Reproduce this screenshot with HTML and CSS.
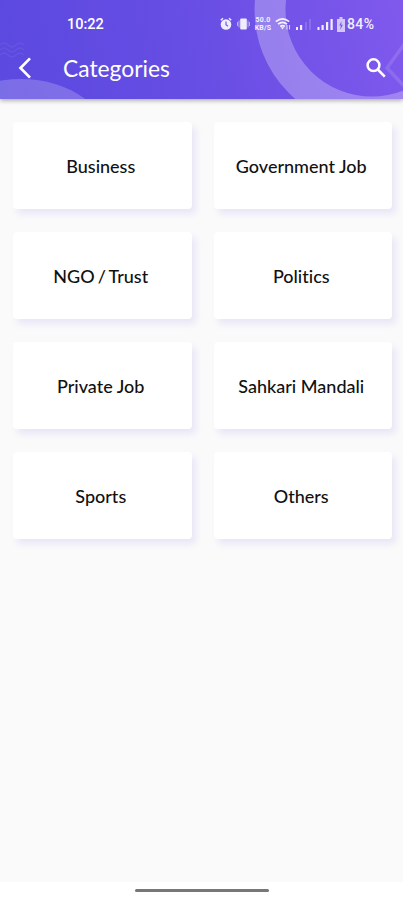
FILE: index.html
```
<!DOCTYPE html>
<html lang="en">
<head>
<meta charset="utf-8">
<meta name="viewport" content="width=device-width, initial-scale=1">
<title>Categories</title>
<link rel="stylesheet" href="styles.css">
</head>
<body>
<header class="header">
  <svg class="pattern" viewBox="0 0 403 99" aria-hidden="true">
    <circle cx="372" cy="10" r="102" fill="none" stroke="#fff" stroke-opacity=".27" stroke-width="31"/>
    <ellipse cx="21" cy="147" rx="91" ry="68" fill="#fff" fill-opacity=".2"/>
    <path d="M405 43L387 68l18 19" fill="none" stroke="#fff" stroke-opacity=".12" stroke-width="3.500"/>
    <path d="M0 45q4-4 8 0t8 0 8 0M0 50q4-4 8 0t8 0 8 0M0 55q4-4 8 0t8 0 8 0" fill="none" stroke="#fff" stroke-opacity=".06" stroke-width="1.5"/>
  </svg>
  <div class="status">
    <span class="time">10:22</span>
    <div class="indicators">
      <svg class="alarm" width="12" height="14" viewBox="0 0 12 14"><path d="M.8 3.2L3 1.2M11.200 3.200L9 1.200" stroke="#fff" stroke-width="1.5"/><circle cx="6" cy="7.500" r="5.300" fill="#fff"/><path d="M6 4.500v3.300l2 1.400" fill="none" stroke="#7359e8" stroke-width="1.200"/></svg>
      <svg class="vibrate" width="13" height="14" viewBox="0 0 13 14"><rect x="3.200" y="1.500" width="6.600" height="11" rx="1" fill="#fff"/><path d="M2 3.500v7M11 3.500v7M.5 5v4M12.500 5v4" stroke="#fff" stroke-opacity=".6"/></svg>
      <span class="speed"><b>50.0</b><b>KB/S</b></span>
      <svg class="wifi" width="17" height="14" viewBox="0 0 17 14"><g fill="none" stroke="#fff" stroke-width="1.700"><path d="M.8 4.700q6.700-5.500 13.400 0M3 7.200q4.500-3.600 9 0M5.200 9.500q2.300-1.800 4.600 0"/></g><path d="M5.800 10.300h3.400L7.500 12.500z" fill="#fff"/><path d="M12 8v4.500M14.500 8v4.500" stroke="#fff" stroke-opacity=".75" stroke-width="1.200"/></svg>
      <svg class="signal-one" width="17" height="14" viewBox="0 0 17 14" fill="#fff"><path d="M1 10h2v3H1zM5 8h2.200v5H5z"/><path d="M10 5h2v8h-2zM14 2h2v11h-2z" opacity=".18"/></svg>
      <svg class="signal-two" width="17" height="14" viewBox="0 0 17 14" fill="#fff"><path d="M.5 10h2v3h-2zM4.500 8h2.200v5H4.500zM9 5h2.200v8H9zM13.500 2h2.200v11h-2.200z"/></svg>
      <svg class="battery" width="8" height="15" viewBox="0 0 8 15"><path d="M2.500 0h3v2H8v13H0V2h2.500z" fill="#fff" fill-opacity=".75"/><path d="M4.600 4L2.300 8.500h1.500L3.300 13l2.500-5.200H4.200z" fill="#7658e6"/></svg>
      <span class="percent">84%</span>
    </div>
  </div>
  <div class="toolbar">
    <svg class="back" width="16" height="24" viewBox="0 0 16 24"><path d="M13 2.400L3.500 12l9.500 9.600" fill="none" stroke="#fff" stroke-width="2.700"/></svg>
    <h1 class="title">Categories</h1>
    <svg class="search" width="22" height="22" viewBox="0 0 22 22" fill="none" stroke="#fff" stroke-width="2.500"><circle cx="8.500" cy="8.200" r="5.900"/><path d="M12.800 12.500L19.800 19.600"/></svg>
  </div>
</header>
<main class="grid">
  <div class="card">Business</div>
  <div class="card">Government Job</div>
  <div class="card tight">NGO / Trust</div>
  <div class="card">Politics</div>
  <div class="card">Private Job</div>
  <div class="card">Sahkari Mandali</div>
  <div class="card">Sports</div>
  <div class="card">Others</div>
</main>
<footer class="navbar"><div class="handle"></div></footer>
</body>
</html>
```
FILE: styles.css
```
* { box-sizing: border-box; }
body {
  margin: 0;
  height: 900px;
  display: flex;
  flex-direction: column;
  overflow: hidden;
  background: #fafafa;
  font-family: Lato, sans-serif;
}
.header {
  position: relative;
  height: 99px;
  flex: none;
  color: #fff;
  background: linear-gradient(78deg, #5b49e0 0%, #664de3 45%, #8059ed 100%);
  box-shadow: 0 1px 5px rgba(0, 0, 0, .4);
}
.pattern {
  position: absolute;
  inset: 0;
  width: 403px;
  height: 99px;
}
.status {
  position: relative;
  height: 42px;
  padding: 6px 28px 0 67px;
  display: flex;
  align-items: center;
  justify-content: space-between;
  font-family: Roboto, sans-serif;
}
.time { font-size: 14.500px; font-weight: 500; }
.indicators { display: flex; align-items: center; opacity: .9; }
.indicators svg { flex: none; }
.vibrate { margin-left: 5px; }
.speed {
  width: 18px;
  margin-left: 4px;
  display: flex;
  flex-direction: column;
  align-items: center;
  font-size: 7px;
  line-height: 8px;
  letter-spacing: .2px;
}
.wifi { margin-left: 3px; }
.signal-one { margin-left: 3px; }
.signal-two { margin-left: 5px; }
.battery { margin-left: 3px; }
.percent { width: 28px; margin-left: 2px; font-size: 14px; font-weight: 500; letter-spacing: .4px; white-space: nowrap; }
.toolbar {
  position: relative;
  height: 52px;
  padding: 0 16px 0 17px;
  display: flex;
  align-items: center;
}
.title { margin: 0 auto 0 30px; font-size: 22.800px; font-weight: 400; line-height: 28px; }
.grid {
  flex: 1;
  padding: 23px 11px 0 13px;
  display: grid;
  grid-template-columns: 1fr 1fr;
  grid-auto-rows: 87px;
  gap: 23px 22px;
  align-content: start;
}
.card {
  display: flex;
  align-items: center;
  justify-content: center;
  padding-right: 3px;
  border-radius: 4px;
  background: #fff;
  color: #111;
  font-size: 18px;
  font-weight: 500;
  font-variant-ligatures: none;
  box-shadow: 4px 5px 7px rgba(98, 76, 226, .11);
}
.tight { word-spacing: -1.500px; }
.navbar {
  flex: none;
  height: 18px;
  display: flex;
  justify-content: center;
  padding-top: 7px;
  background: #fff;
}
.handle { width: 134px; height: 3px; border-radius: 2px; background: #777; }
```
